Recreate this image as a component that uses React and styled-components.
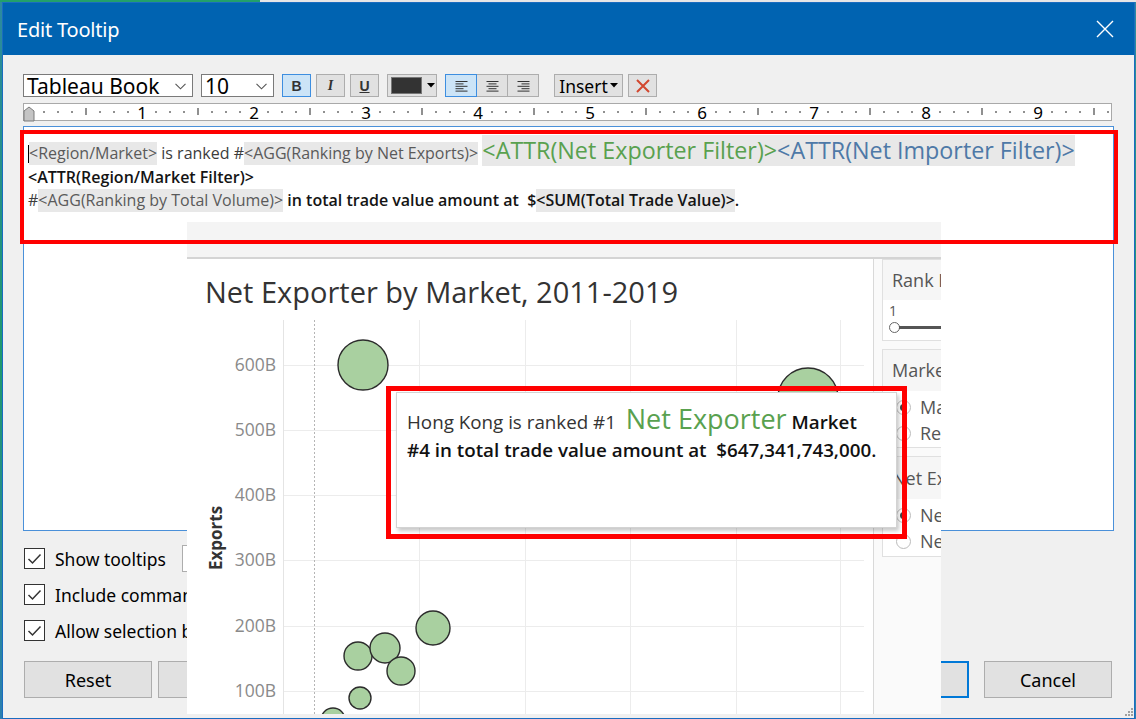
import React from "react";
import styled, { createGlobalStyle } from "styled-components";

const UI = `"Noto Sans", "Open Sans", "DejaVu Sans", sans-serif`;
const TAB = `"Open Sans", "Noto Sans", sans-serif`;

const GlobalStyle = createGlobalStyle`
  html, body { margin: 0; padding: 0; }
  body { width: 1136px; height: 719px; overflow: hidden; background: #d9d9d9; font-family: ${UI}; }
  * { box-sizing: border-box; }
`;

const Screen = styled.div`
  position: relative;
  width: 1136px;
  height: 719px;
  overflow: hidden;
  padding: 2px 1px 0 2px;
  background:
    linear-gradient(to right, #22a06b 0 260px, #e6e6e6 260px) top / 100% 2px no-repeat,
    linear-gradient(to bottom, #2c8aa0, #1f9a6e 50%, #2c7fb0);
`;

const Dialog = styled.div`
  width: 1133px;
  height: 717px;
  border: 1px solid #1a6cc0;
  background: #f0f0f0;
  display: flex;
  flex-direction: column;
`;

const TitleBar = styled.div`
  height: 52px;
  flex: none;
  background: #0063b1;
  display: flex;
  align-items: center;
  justify-content: space-between;
  padding: 0 20px 0 14px;
  color: #fff;
`;

const Title = styled.div`
  font-family: ${UI};
  font-size: 20px;
  letter-spacing: -0.2px;
`;

const Body = styled.div`
  flex: 1;
  display: flex;
  flex-direction: column;
  padding: 19px 0 0 20px;
`;

const Toolbar = styled.div`
  display: flex;
  align-items: center;
  height: 23px;
`;

const Select = styled.div`
  width: ${(p) => p.$w}px;
  height: 23px;
  margin-right: 8px;
  border: 1px solid #7a7a7a;
  background: #fff;
  display: flex;
  align-items: center;
  justify-content: space-between;
  padding: 1px 6px 0 3px;
  font-family: ${UI};
  font-size: 21px;
  color: #000;
  line-height: 1;
`;

const ToggleBtn = styled.div`
  width: 29px;
  height: 23px;
  flex: none;
  margin-right: ${(p) => p.$mr ?? 5}px;
  border: 1px solid ${(p) => (p.$active ? "#3d8ee0" : "#adadad")};
  background: ${(p) => (p.$active ? "#cce4f7" : "#e1e1e1")};
  display: flex;
  align-items: center;
  justify-content: center;
  font-family: ${(p) => (p.$serif ? `"Liberation Serif", serif` : `"Liberation Sans", sans-serif`)};
  font-weight: bold;
  font-style: ${(p) => (p.$italic ? "italic" : "normal")};
  text-decoration: ${(p) => (p.$under ? "underline" : "none")};
  font-size: 14px;
  color: #333;
`;

const ColorBtn = styled.div`
  width: 50px;
  height: 23px;
  margin-right: 8px;
  border: 1px solid #adadad;
  background: #e1e1e1;
  display: flex;
  align-items: center;
  padding: 0 0 0 3px;
  gap: 5px;
`;

const Swatch = styled.div`
  width: 31px;
  height: 17px;
  background: #333;
  border: 1px solid #777;
`;

const AlignGroup = styled.div`
  display: flex;
  margin-right: 15px;
`;

const AlignBtn = styled(ToggleBtn)`
  width: 32px;
  margin-right: 0;
  margin-left: ${(p) => (p.$first ? 0 : -1)}px;
  position: relative;
  z-index: ${(p) => (p.$active ? 1 : 0)};
`;

const InsertBtn = styled.div`
  width: 69px;
  height: 23px;
  margin-right: 5px;
  border: 1px solid #adadad;
  background: #e1e1e1;
  display: flex;
  align-items: center;
  justify-content: center;
  gap: 2px;
  font-family: ${UI};
  font-size: 17.5px;
  color: #000;
`;

const RulerBox = styled.div`
  margin-top: 6px;
  width: 1089px;
  height: 18px;
  border: 1px solid #a9a9a9;
  background: #fff;
  display: flex;
`;

const Editor = styled.div`
  margin-top: 5px;
  width: 1091px;
  height: 405px;
  border: 1px solid #4a90d9;
  background: #fff;
  padding: 8px 0 0 4px;
  font-family: ${TAB};
  font-size: 16px;
`;

const EditorLine = styled.div`
  height: ${(p) => p.$h}px;
  line-height: ${(p) => p.$h}px;
  white-space: pre;
  display: flex;
  align-items: baseline;
`;

const Caret = styled.span`
  display: inline-block;
  width: 1px;
  height: 18px;
  background: #000;
  align-self: center;
  margin-top: 6px;
`;

const Chip = styled.span`
  background: #e8e8e8;
  color: ${(p) => p.$color || "#5a5a5a"};
  font-weight: ${(p) => (p.$strong ? 600 : 400)};
  line-height: 23px;
`;

const Plain = styled.span`
  color: ${(p) => (p.$strong ? "#141414" : "#3c3c3c")};
  font-weight: ${(p) => (p.$strong ? 600 : 400)};
`;

const BigChip = styled.span`
  background: #e8e8e8;
  color: ${(p) => p.$color};
  font-size: 23.3px;
  line-height: 31px;
`;

const Options = styled.div`
  margin-top: 17px;
  display: flex;
  flex-direction: column;
  gap: 15px;
  padding-left: 1px;
`;

const CheckRow = styled.div`
  display: flex;
  align-items: center;
  height: 21px;
`;

const CheckBox = styled.div`
  width: 21px;
  height: 21px;
  flex: none;
  border: 1px solid #333;
  background: #fff;
  margin-right: 10px;
  display: flex;
  align-items: center;
  justify-content: center;
`;

const CheckLabel = styled.span`
  font-family: ${UI};
  font-size: 17.5px;
  color: #000;
  white-space: nowrap;
`;

const TipSelect = styled.div`
  margin-left: 16px;
  width: 300px;
  height: 27px;
  border: 1px solid #adadad;
  background: #fff;
`;

const ButtonRow = styled.div`
  margin-top: 20px;
  width: 1089px;
  padding-left: 1px;
  display: flex;
  justify-content: space-between;
`;

const ButtonGroup = styled.div`
  display: flex;
  gap: ${(p) => p.$gap}px;
`;

const DialogButton = styled.div`
  width: 128px;
  height: 37px;
  border: ${(p) => (p.$primary ? "2px solid #0078d7" : "1px solid #adadad")};
  background: #e1e1e1;
  display: flex;
  align-items: center;
  justify-content: center;
  font-family: ${UI};
  font-size: 18px;
  color: #000;
`;

const Grip = styled.svg`
  position: absolute;
  right: 3px;
  bottom: 3px;
`;

const Annotation = styled.div`
  position: absolute;
  left: ${(p) => p.$x}px;
  top: ${(p) => p.$y}px;
  width: ${(p) => p.$w}px;
  height: ${(p) => p.$h}px;
  border: ${(p) => p.$t}px solid #ff0000;
  pointer-events: none;
`;

/* ---------- chart screenshot overlay ---------- */

const ChartShot = styled.div`
  position: absolute;
  left: 187px;
  top: 222px;
  width: 754px;
  height: 492px;
  overflow: hidden;
  background: #fff;
  display: flex;
  flex-direction: column;
`;

const ShotTop = styled.div`
  height: 37px;
  flex: none;
  background: #f4f4f4;
  border-bottom: 2px solid #d4d4d4;
`;

const ShotBody = styled.div`
  flex: 1;
  display: flex;
`;

const ChartPanel = styled.div`
  width: 687px;
  flex: none;
  border-right: 1px solid #d9d9d9;
  display: flex;
  flex-direction: column;
`;

const ChartTitle = styled.div`
  padding: 16px 0 0 18px;
  height: 50px;
  font-family: ${TAB};
  font-size: 29px;
  line-height: 34px;
  color: #333;
  white-space: nowrap;
`;

const SidePanel = styled.div`
  flex: 1;
  background: #fafafa;
  padding: 0 0 0 8px;
  display: flex;
  flex-direction: column;
  gap: 8px;
`;

const FilterCard = styled.div`
  width: 160px;
  height: ${(p) => p.$h}px;
  flex: none;
  background: #fff;
  border: 1px solid #e0e0e0;
  font-family: ${TAB};
  white-space: nowrap;
`;

const CardHeader = styled.div`
  height: ${(p) => p.$h}px;
  line-height: ${(p) => p.$h}px;
  background: #f6f6f6;
  padding-left: 9px;
  font-size: 18px;
  color: #555;
`;

const CardBody = styled.div`
  padding: ${(p) => p.$pt}px 0 0 ${(p) => p.$pl}px;
  display: flex;
  flex-direction: column;
`;

const SmallValue = styled.div`
  font-size: 14px;
  color: #555;
  line-height: 16px;
`;

const Slider = styled.div`
  margin-top: 3px;
  display: flex;
  align-items: center;
`;

const Knob = styled.div`
  width: 11px;
  height: 11px;
  flex: none;
  border: 1px solid #666;
  border-radius: 50%;
  background: #fff;
`;

const Track = styled.div`
  width: 60px;
  height: 3px;
  background: #555;
  margin-left: -1px;
`;

const RadioRow = styled.div`
  height: 26px;
  display: flex;
  align-items: center;
  font-size: 18px;
  color: #555;
`;

const Radio = styled.div`
  width: 15px;
  height: 15px;
  flex: none;
  border-radius: 50%;
  border: 1px solid #bbb;
  background: #fff;
  margin-right: 9px;
  display: flex;
  align-items: center;
  justify-content: center;
  &::after {
    content: "";
    width: 7px;
    height: 7px;
    border-radius: 50%;
    background: ${(p) => (p.$on ? "#444" : "transparent")};
  }
`;

const TooltipCard = styled.div`
  position: absolute;
  left: 396px;
  top: 392px;
  width: 501px;
  height: 136px;
  background: #fff;
  border: 1px solid #d3d3d3;
  box-shadow: 2px 3px 4px rgba(0, 0, 0, 0.22);
  padding: 9px 0 0 10px;
  font-family: ${TAB};
  white-space: pre;
`;

const TipLine = styled.div`
  height: ${(p) => p.$h}px;
  line-height: ${(p) => p.$h}px;
  display: flex;
  align-items: baseline;
  font-size: 18.8px;
  color: ${(p) => (p.$strong ? "#111" : "#333")};
  font-weight: ${(p) => (p.$strong ? 600 : 400)};
`;

const TipGreen = styled.span`
  font-size: 27px;
  color: #59a14f;
  font-weight: 400;
`;

const TipBold = styled.span`
  font-weight: 600;
  color: #111;
`;

/* ---------- drawings ---------- */

const Chevron = () => (
  <svg width="11" height="7" viewBox="0 0 11 7">
    <path d="M0.5 0.8 L5.5 5.8 L10.5 0.8" fill="none" stroke="#555" strokeWidth="1.1" />
  </svg>
);

const DownTri = ({ w = 8 }) => (
  <svg width={w} height="5" viewBox="0 0 8 5">
    <path d="M0 0 H8 L4 4.5 Z" fill="#000" />
  </svg>
);

const AlignIcon = ({ mode }) => {
  const widths = [12, 8, 12, 8, 12];
  return (
    <svg width="13" height="12" viewBox="0 0 13 12">
      {widths.map((w, i) => {
        const x = mode === "left" ? 0.5 : mode === "right" ? 12.5 - w : (13 - w) / 2;
        return <rect key={i} x={x} y={1 + i * 2.4} width={w} height="1" fill="#333" />;
      })}
    </svg>
  );
};

const Ruler = () => {
  const items = [];
  for (let i = 1; i <= 77; i++) {
    const x = 6 + 14 * i;
    if (i % 8 === 0)
      items.push(
        <text key={i} x={x} y={15} textAnchor="middle" fontSize="17" fontFamily="Noto Sans, sans-serif" fill="#000">
          {i / 8}
        </text>
      );
    else if (i % 4 === 0) items.push(<rect key={i} x={x - 0.5} y={4} width={1} height={7} fill="#222" />);
    else items.push(<rect key={i} x={x - 0.5} y={7} width={1} height={2} fill="#222" />);
  }
  return (
    <svg width="1087" height="16" viewBox="0 0 1087 16" style={{ overflow: "visible" }}>
      <polygon points="5,3 10,7 10,17 0,17 0,7" fill="#c4c4c4" stroke="#7a7a7a" strokeWidth="1" />
      {items}
    </svg>
  );
};

const Check = () => (
  <svg width="15" height="12" viewBox="0 0 15 12">
    <path d="M1.5 6 L5.5 10 L13.5 1.5" fill="none" stroke="#333" strokeWidth="1.5" />
  </svg>
);

const gridY = [
  { y: 56, l: "600B" },
  { y: 121, l: "500B" },
  { y: 186, l: "400B" },
  { y: 251, l: "300B" },
  { y: 317, l: "200B" },
  { y: 382, l: "100B" },
];
const gridX = [232, 338, 443, 549, 653];
const bubbles = [
  { x: 176, y: 56, r: 25 },
  { x: 621, y: 89, r: 30 },
  { x: 246, y: 319, r: 17 },
  { x: 171, y: 347, r: 14 },
  { x: 198, y: 339, r: 15 },
  { x: 214, y: 362, r: 14 },
  { x: 173, y: 389, r: 11 },
  { x: 146, y: 411, r: 12 },
];

const Plot = () => (
  <svg width="686" height="405" viewBox="0 0 686 405">
    {gridY.map((g) => (
      <line key={g.l} x1="96" x2="677" y1={g.y + 0.5} y2={g.y + 0.5} stroke="#ececec" strokeWidth="1" />
    ))}
    <line x1="96.5" x2="96.5" y1="11" y2="405" stroke="#e4e4e4" />
    {gridX.map((x) => (
      <line key={x} x1={x + 0.5} x2={x + 0.5} y1="11" y2="405" stroke="#ececec" />
    ))}
    <line x1="127.5" x2="127.5" y1="11" y2="405" stroke="#b5b5b5" strokeDasharray="2 2" />
    {gridY.map((g) => (
      <text key={g.l} x="89" y={g.y + 6} textAnchor="end" fontSize="17.5" fontFamily="Open Sans, sans-serif" fill="#8a8a8a">
        {g.l}
      </text>
    ))}
    <text
      x="0"
      y="0"
      transform="translate(35 229) rotate(-90)"
      textAnchor="middle"
      fontSize="17"
      fontWeight="700"
      fontFamily="Open Sans, sans-serif"
      fill="#333"
    >
      Exports
    </text>
    {bubbles.map((b, i) => (
      <circle key={i} cx={b.x} cy={b.y} r={b.r} fill="#a9d0a0" stroke="#2c2c2c" strokeWidth="1.4" />
    ))}
  </svg>
);

export default function App() {
  return (
    <>
      <GlobalStyle />
      <Screen>
        <Dialog>
          <TitleBar>
            <Title>Edit Tooltip</Title>
            <svg width="18" height="18" viewBox="0 0 18 18">
              <path d="M1 1 L17 17 M17 1 L1 17" stroke="#fff" strokeWidth="1.4" />
            </svg>
          </TitleBar>
          <Body>
            <Toolbar>
              <Select $w={170}>
                <span>Tableau Book</span>
                <Chevron />
              </Select>
              <Select $w={73}>
                <span>10</span>
                <Chevron />
              </Select>
              <ToggleBtn $active>B</ToggleBtn>
              <ToggleBtn $serif $italic>I</ToggleBtn>
              <ToggleBtn $under $mr={8}>U</ToggleBtn>
              <ColorBtn>
                <Swatch />
                <DownTri w={8} />
              </ColorBtn>
              <AlignGroup>
                <AlignBtn $first $active>
                  <AlignIcon mode="left" />
                </AlignBtn>
                <AlignBtn>
                  <AlignIcon mode="center" />
                </AlignBtn>
                <AlignBtn>
                  <AlignIcon mode="right" />
                </AlignBtn>
              </AlignGroup>
              <InsertBtn>
                <span>Insert</span>
                <DownTri w={8} />
              </InsertBtn>
              <ToggleBtn>
                <svg width="16" height="16" viewBox="0 0 16 16">
                  <path d="M2 2 L14 14 M14 2 L2 14" stroke="#d2472f" strokeWidth="2" />
                </svg>
              </ToggleBtn>
            </Toolbar>

            <RulerBox>
              <Ruler />
            </RulerBox>

            <Editor>
              <EditorLine $h={31}>
                <Caret />
                <Chip>{"<Region/Market>"}</Chip>
                <Plain>{" is ranked #"}</Plain>
                <Chip>{"<AGG(Ranking by Net Exports)>"}</Chip>
                <Plain>{" "}</Plain>
                <BigChip $color="#59a14f">{"<ATTR(Net Exporter Filter)>"}</BigChip>
                <BigChip $color="#4e79a7">{"<ATTR(Net Importer Filter)>"}</BigChip>
              </EditorLine>
              <EditorLine $h={23}>
                <Plain $strong>{"<ATTR(Region/Market Filter)>"}</Plain>
              </EditorLine>
              <EditorLine $h={23}>
                <Plain>{"#"}</Plain>
                <Chip>{"<AGG(Ranking by Total Volume)>"}</Chip>
                <Plain $strong>{" in total trade value amount at  $"}</Plain>
                <Chip $strong $color="#141414">{"<SUM(Total Trade Value)>"}</Chip>
                <Plain $strong>{"."}</Plain>
              </EditorLine>
            </Editor>

            <Options>
              <CheckRow>
                <CheckBox>
                  <Check />
                </CheckBox>
                <CheckLabel>Show tooltips</CheckLabel>
                <TipSelect />
              </CheckRow>
              <CheckRow>
                <CheckBox>
                  <Check />
                </CheckBox>
                <CheckLabel>Include command buttons</CheckLabel>
              </CheckRow>
              <CheckRow>
                <CheckBox>
                  <Check />
                </CheckBox>
                <CheckLabel>Allow selection by category</CheckLabel>
              </CheckRow>
            </Options>

            <ButtonRow>
              <ButtonGroup $gap={6}>
                <DialogButton>Reset</DialogButton>
                <DialogButton>Preview</DialogButton>
              </ButtonGroup>
              <ButtonGroup $gap={15}>
                <DialogButton $primary>OK</DialogButton>
                <DialogButton>Cancel</DialogButton>
              </ButtonGroup>
            </ButtonRow>
          </Body>
        </Dialog>

        <Grip width="8" height="8" viewBox="0 0 8 8">
          {[
            [6, 0],
            [6, 3],
            [3, 3],
            [6, 6],
            [3, 6],
            [0, 6],
          ].map(([x, y]) => (
            <rect key={`${x}-${y}`} x={x} y={y} width="2" height="2" fill="#a0a0a0" />
          ))}
        </Grip>

        <ChartShot>
          <ShotTop />
          <ShotBody>
            <ChartPanel>
              <ChartTitle>Net Exporter by Market, 2011-2019</ChartTitle>
              <Plot />
            </ChartPanel>
            <SidePanel>
              <FilterCard $h={82}>
                <CardHeader $h={40}>Rank Filter</CardHeader>
                <CardBody $pt={3} $pl={6}>
                  <SmallValue>1</SmallValue>
                  <Slider>
                    <Knob />
                    <Track />
                  </Slider>
                </CardBody>
              </FilterCard>
              <FilterCard $h={99}>
                <CardHeader $h={41}>Market Type</CardHeader>
                <CardBody $pt={3} $pl={13}>
                  <RadioRow>
                    <Radio $on />
                    Market
                  </RadioRow>
                  <RadioRow>
                    <Radio />
                    Region
                  </RadioRow>
                </CardBody>
              </FilterCard>
              <FilterCard $h={101}>
                <CardHeader $h={42}>Net Exporter/Importer</CardHeader>
                <CardBody $pt={3} $pl={13}>
                  <RadioRow>
                    <Radio $on />
                    Net Exporter
                  </RadioRow>
                  <RadioRow>
                    <Radio />
                    Net Importer
                  </RadioRow>
                </CardBody>
              </FilterCard>
            </SidePanel>
          </ShotBody>
        </ChartShot>

        <TooltipCard>
          <TipLine $h={34}>
            {"Hong Kong is ranked #1  "}
            <TipGreen>Net Exporter</TipGreen>
            <TipBold>{" Market"}</TipBold>
          </TipLine>
          <TipLine $h={28} $strong>
            {"#4 in total trade value amount at  $647,341,743,000."}
          </TipLine>
        </TooltipCard>

        <Annotation $x={20} $y={130} $w={1098} $h={114} $t={4} />
        <Annotation $x={386} $y={386} $w={521} $h={153} $t={5} />
      </Screen>
    </>
  );
}
